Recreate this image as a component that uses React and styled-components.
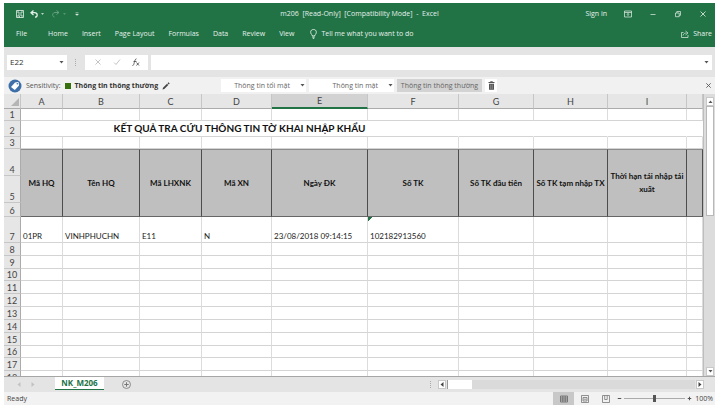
import React from "react";
import styled, { createGlobalStyle } from "styled-components";

const UI_FONT = '"Open Sans", "Noto Sans", sans-serif';
const CELL_FONT = 'Lato, "Noto Sans", sans-serif';
const GREEN = "#217346";

const GlobalStyle = createGlobalStyle`
  * { box-sizing: border-box; }
  body { margin: 0; background: #fff; font-family: ${UI_FONT}; font-size: 7px; color: #333; }
  button, input, table { font: inherit; color: inherit; }
  button { border: 0; padding: 0; background: none; }
  svg { display: block; }
`;

const Window = styled.div`
  display: flex;
  flex-direction: column;
  height: 100vh;
  padding: 3px 0 0 4px;
  overflow: hidden;
`;

const Ribbon = styled.header`
  flex: none;
  background: ${GREEN};
  color: #e6f0ea;
`;

const TitleBar = styled.div`
  display: grid;
  grid-template-columns: 1fr auto 1fr;
  align-items: center;
  height: 21px;
  padding: 0 8px;
`;

const QuickAccess = styled.div`
  display: flex;
  align-items: center;
  gap: 4px;
  padding-left: 4px;
`;

const DocumentTitle = styled.h1`
  margin: 0;
  font-size: 7px;
  font-weight: 400;
  white-space: pre;
`;

const WindowButtons = styled.div`
  display: flex;
  align-items: center;
  justify-content: flex-end;
  gap: 17px;
`;

const IconButton = styled.button`
  display: flex;
  align-items: center;
  justify-content: center;
  flex: none;
  opacity: ${(p) => (p.$faded ? 0.35 : 1)};
`;

const TabBar = styled.nav`
  display: flex;
  align-items: center;
  gap: 14px;
  height: 23px;
  padding: 0 3px 4px 12px;
`;

const RibbonTab = styled.button`
  white-space: nowrap;
  margin-right: ${(p) => (p.$wide ? "7px" : "0")};
`;

const IconLabel = styled.button`
  display: flex;
  align-items: center;
  gap: 4px;
  white-space: nowrap;
  margin-left: ${(p) => (p.$end ? "auto" : "2px")};
`;

const FormulaBar = styled.div`
  display: flex;
  flex: none;
  align-items: center;
  gap: 3px;
  height: 30px;
  padding: 0 3px;
  background: #e4e4e4;
`;

const Field = styled.div`
  display: flex;
  align-items: center;
  flex: ${(p) => (p.$grow ? "1" : "none")};
  width: ${(p) => p.$width || "auto"};
  height: 15px;
  padding: 0 3px;
  background: #fff;
  justify-content: ${(p) => (p.$spread ? "space-around" : "flex-start")};
`;

const FieldInput = styled.input`
  flex: 1;
  min-width: 0;
  height: 13px;
  border: 0;
  padding: 0 0 2px;
  outline: 0;
  background: none;
  font-size: 8px;
`;

const Grip = styled.span`
  width: 1px;
  height: 7px;
  margin: 0 6px 0 5px;
  border-left: 1px dotted #aaa;
`;

const SensitivityBar = styled.div`
  display: grid;
  grid-template-columns: 213px 1fr auto;
  align-items: center;
  flex: none;
  height: 17px;
  padding: 0 3px 0 4px;
  background: #f1f1f1;
`;

const SensitivityInfo = styled.div`
  display: flex;
  align-items: center;
  gap: 4px;
  color: #555;
  white-space: nowrap;
`;

const Swatch = styled.span`
  width: 6px;
  height: 6px;
  background: #38700f;
`;

const CurrentLabel = styled.strong`
  font-weight: 700;
  color: #333;
`;

const LabelOptions = styled.div`
  display: flex;
  gap: 3px;
`;

const LabelOption = styled.button`
  display: flex;
  align-items: center;
  justify-content: ${(p) => (p.$selected ? "center" : "flex-end")};
  gap: 10px;
  width: ${(p) => (p.$icon ? "12px" : "85px")};
  height: 13px;
  padding: 0 ${(p) => (p.$icon || p.$selected ? "2px" : "1px")};
  background: ${(p) => (p.$selected ? "#d3d3d3" : "#fff")};
  color: #666;
  white-space: nowrap;
`;

const SheetArea = styled.main`
  display: flex;
  flex: 1;
  min-height: 0;
  border-bottom: 1px solid #a6a6a6;
`;

const SheetView = styled.div`
  flex: 1;
  min-width: 0;
  overflow: hidden;
`;

const Sheet = styled.table`
  width: 100%;
  table-layout: fixed;
  border-collapse: separate;
  border-spacing: 0;
  font-family: ${CELL_FONT};
  font-size: 8px;
  line-height: 11px;
  color: #222;
`;

const Col = styled.col`
  width: ${(p) => p.$width};
`;

const Row = styled.tr`
  height: ${(p) => p.$height};
`;

const ColumnHead = styled.th`
  padding: 0;
  font-size: 9px;
  font-weight: 400;
  color: #444;
  background: ${(p) => (p.$active ? "#d2d2d2" : "#e6e6e6")};
  border-right: 1px solid #c6c6c6;
  border-bottom: ${(p) => (p.$active ? `2px solid ${GREEN}` : "1px solid #ababab")};
`;

const Corner = styled(ColumnHead)`
  vertical-align: bottom;

  svg {
    margin: 0 1px 2px auto;
  }
`;

const RowHead = styled.th`
  padding: 0;
  overflow: hidden;
  font-size: 9px;
  font-weight: 400;
  vertical-align: bottom;
  color: #444;
  background: #e6e6e6;
  border-right: 1px solid #ababab;
  border-bottom: 1px solid #c6c6c6;
`;

const Cell = styled.td`
  padding: 0 2px;
  overflow: hidden;
  white-space: nowrap;
  vertical-align: bottom;
  border-right: 1px solid ${(p) => (p.$open ? "#fff" : "#dcdcdc")};
  border-bottom: 1px solid #d4d4d4;
  background: ${(p) =>
    p.$flagged ? `linear-gradient(135deg, ${GREEN} 3px, transparent 3px)` : "#fff"};
`;

const TitleCell = styled(Cell)`
  font-size: 10px;
  font-weight: 700;
  text-align: center;
  vertical-align: middle;
  color: #111;
`;

const HeadingCell = styled.th`
  padding: 0;
  font-size: 8px;
  font-weight: 700;
  line-height: 13px;
  color: #111;
  background: #bfbfbf;
  border-right: 1px solid #4d4d4d;
  border-bottom: 1px solid #666;
  border-top: 1px solid #8c8c8c;
`;

const VerticalScroll = styled.div`
  display: flex;
  flex: none;
  flex-direction: column;
  align-items: center;
  width: 12px;
  padding: 3px 0 0 1px;
  background: #dcdcdc;
  border-left: 1px solid #bdbdbd;
`;

const ScrollButton = styled(IconButton)`
  width: 8px;
  height: 9px;
  background: #fff;
  border: 1px solid #c8c8c8;
`;

const VerticalThumb = styled.div`
  width: 8px;
  height: 110px;
  margin-bottom: auto;
  background: #fff;
  border: 1px solid #b8b8b8;
`;

const SheetTabs = styled.footer`
  display: grid;
  grid-template-columns: 1fr 279px;
  flex: none;
  height: 15px;
  padding-right: 11px;
  background: #e4e4e4;
`;

const TabGroup = styled.div`
  display: flex;
  align-items: center;
  gap: 10px;
  padding-left: 13px;
`;

const SheetTab = styled.button`
  align-self: flex-start;
  width: 49px;
  height: 13px;
  margin: 0 8px 0 10px;
  background: #fff;
  border-bottom: 1px solid ${GREEN};
  color: ${GREEN};
  font-size: 8px;
  line-height: 12px;
  font-weight: 700;
  white-space: nowrap;
`;

const HorizontalScroll = styled.div`
  display: flex;
  align-items: center;
  gap: 1px;
`;

const HorizontalTrack = styled.div`
  flex: 1;
  height: 9px;
  background: #dadada;
`;

const HorizontalThumb = styled.div`
  width: 25px;
  height: 9px;
  background: #fff;
  border-left: 1px solid #999;
`;

const StatusBar = styled.div`
  display: flex;
  align-items: center;
  justify-content: space-between;
  flex: none;
  height: 13px;
  padding: 0 2px 0 3px;
  background: #f2f2f2;
  color: #444;
  font-size: 7px;
`;

const ViewControls = styled.div`
  display: flex;
  align-items: center;
`;

const ViewButton = styled(IconButton)`
  width: 21px;
  height: 13px;
  background: ${(p) => (p.$active ? "#c8c8c8" : "transparent")};
`;

const ZoomSlider = styled.input`
  appearance: none;
  width: 61px;
  height: 9px;
  margin: 0 1px;
  background: linear-gradient(#aaa, #aaa) center / 100% 1px no-repeat;

  &::-webkit-slider-thumb {
    appearance: none;
    width: 3px;
    height: 7px;
    background: #555;
  }
`;

const ZoomValue = styled.span`
  margin-left: 2px;
`;

function Caret({ up, color = "#555" }) {
  return (
    <svg width="5" height="3" viewBox="0 0 5 3">
      <path d={up ? "M0.5 3 2.5 0.5 4.5 3z" : "M0.5 0 2.5 2.5 4.5 0z"} fill={color} />
    </svg>
  );
}

function SideArrow({ left, color = "#444" }) {
  return (
    <svg width="4" height="5" viewBox="0 0 4 5">
      <path d={left ? "M3.5 0 0.5 2.5 3.5 5z" : "M0.5 0 3.5 2.5 0.5 5z"} fill={color} />
    </svg>
  );
}

function Stroke({ d, size = 8, width = 0.8, color = "currentColor" }) {
  return (
    <svg width={size} height={size} viewBox="0 0 8 8" fill="none" stroke={color} strokeWidth={width}>
      <path d={d} />
    </svg>
  );
}

const CROSS = "M1.5 1.5 6.5 6.5M6.5 1.5 1.5 6.5";

const COLUMNS = [
  ["A", "42px", "Mã HQ", "01PR"],
  ["B", "77px", "Tên HQ", "VINHPHUCHN"],
  ["C", "62px", "Mã LHXNK", "E11"],
  ["D", "70px", "Mã XN", "N"],
  ["E", "96px", "Ngày ĐK", "23/08/2018 09:14:15"],
  ["F", "91px", "Số TK", "102182913560"],
  ["G", "75px", "Số TK đầu tiên", ""],
  ["H", "74px", "Số TK tạm nhập TX", ""],
  ["I", "79px", "Thời hạn tái nhập tái xuất", ""],
  ["", "auto", "", ""],
];

const EMPTY_ROWS = [
  [8, "13px"], [9, "13px"], [10, "12px"], [11, "13px"], [12, "13px"], [13, "13px"],
  [14, "13px"], [15, "13px"], [16, "12px"], [17, "13px"], [18, "13px"],
];

function EmptyRow({ number, height }) {
  return (
    <Row $height={height}>
      <RowHead scope="row">{number}</RowHead>
      {COLUMNS.map(([name]) => <Cell key={name} />)}
    </Row>
  );
}

function Spreadsheet() {
  return (
    <Sheet>
      <colgroup>
        <Col $width="17px" />
        {COLUMNS.map(([name, width]) => <Col key={name} $width={width} />)}
      </colgroup>
      <thead>
        <Row $height="15px">
          <Corner aria-label="Select all">
            <svg width="8" height="8" viewBox="0 0 8 8"><path d="M8 0V8H0z" fill="#b5b5b5" /></svg>
          </Corner>
          {COLUMNS.map(([name]) => (
            <ColumnHead key={name} scope="col" $active={name === "E"}>{name}</ColumnHead>
          ))}
        </Row>
      </thead>
      <tbody>
        <EmptyRow number={1} height="12px" />
        <Row $height="16px">
          <RowHead scope="row">2</RowHead>
          <TitleCell colSpan={6} $open>KẾT QUẢ TRA CỨU THÔNG TIN TỜ KHAI NHẬP KHẨU</TitleCell>
          <Cell $open /><Cell $open /><Cell $open /><Cell $open />
        </Row>
        <EmptyRow number={3} height="12px" />
        <Row $height="27px">
          <RowHead scope="row">4</RowHead>
          {COLUMNS.map(([name, , heading]) => (
            <HeadingCell key={name} rowSpan={3}>{heading}</HeadingCell>
          ))}
        </Row>
        <Row $height="27px"><RowHead scope="row">5</RowHead></Row>
        <Row $height="14px"><RowHead scope="row">6</RowHead></Row>
        <Row $height="26px">
          <RowHead scope="row">7</RowHead>
          {COLUMNS.map(([name, , , value]) => (
            <Cell key={name} $flagged={name === "F"}>{value}</Cell>
          ))}
        </Row>
        {EMPTY_ROWS.map(([number, height]) => (
          <EmptyRow key={number} number={number} height={height} />
        ))}
      </tbody>
    </Sheet>
  );
}

export default function App() {
  return (
    <Window>
      <GlobalStyle />
      <Ribbon>
        <TitleBar>
          <QuickAccess>
            <IconButton aria-label="Save">
              <Stroke d="M0.5 0.5H7.5V7.5H0.5zM2 0.5V3H6V0.5M2 7.5V5H6V7.5M3.5 6V7.5" />
            </IconButton>
            <IconButton aria-label="Undo">
              <svg width="19" height="8" viewBox="0 0 19 8" fill="none" stroke="currentColor" strokeWidth="1.3">
                <path d="M5.500 0.500 3 2.700 5.500 5M3 2.700H6.500C10 2.700 10 7.200 7 7.200" />
                <path d="M13 3.200H16L14.500 4.700z" fill="currentColor" stroke="none" />
              </svg>
            </IconButton>
            <IconButton aria-label="Redo" $faded>
              <svg width="18" height="8" viewBox="0 0 18 8" fill="none" stroke="currentColor">
                <path d="M5.500 0.500 8 2.500 5.500 4.500M8 2.500H4C1 2.500 1 7 3.500 7" />
                <path d="M12 3.200H15L13.500 4.700z" fill="currentColor" stroke="none" />
              </svg>
            </IconButton>
            <IconButton aria-label="Customize quick access">
              <svg width="8" height="8" viewBox="0 0 8 8"><path d="M2.500 2.500H5.500M2.500 4H5.500L4 5.500z" stroke="currentColor" strokeWidth="0.4" fill="currentColor" /></svg>
            </IconButton>
          </QuickAccess>
          <DocumentTitle>{"m206  [Read-Only]  [Compatibility Mode]  -  Excel"}</DocumentTitle>
          <WindowButtons>
            <IconButton>Sign in</IconButton>
            <IconButton aria-label="Ribbon display options">
              <Stroke d="M0.500 1H7.500V7H0.500zM0.500 2.500H7.500M4 6V3.500M3 4.500 4 3.500 5 4.500" width={0.7} />
            </IconButton>
            <IconButton aria-label="Minimize"><Stroke d="M1.500 4.500H6.500" width={0.7} /></IconButton>
            <IconButton aria-label="Restore"><Stroke d="M1.500 3H5.200V6.700H1.500zM2.800 3V1.500H6.500V5.300H5.200" width={0.7} /></IconButton>
            <IconButton aria-label="Close"><Stroke d={CROSS} /></IconButton>
          </WindowButtons>
        </TitleBar>
        <TabBar>
          <RibbonTab $wide>File</RibbonTab>
          {["Home", "Insert", "Page Layout", "Formulas", "Data", "Review", "View"].map((tab) => (
            <RibbonTab key={tab}>{tab}</RibbonTab>
          ))}
          <IconLabel>
            <svg width="7" height="10" viewBox="0 0 7 10" fill="none" stroke="currentColor" strokeWidth="0.9">
              <path d="M2.200 7V6C0 4.500 0 0.500 3.500 0.500S7 4.500 4.800 6V7zM2.300 8.200H4.700M2.800 9.400H4.200" />
            </svg>
            Tell me what you want to do
          </IconLabel>
          <IconLabel $end>
            <Stroke d="M2.500 2.500H0.500V7.500H7V5M2 5.500C2.500 3.500 4 3 5.500 3M4.500 1 7 3 4.500 5" width={0.7} />
            Share
          </IconLabel>
        </TabBar>
      </Ribbon>

      <FormulaBar>
        <Field $width="60px">
          <FieldInput aria-label="Name box" defaultValue="E22" />
          <Caret />
        </Field>
        <Grip />
        <Field $width="63px" $spread>
          <IconButton aria-label="Cancel"><Stroke d={CROSS} color="#b5b5b5" /></IconButton>
          <IconButton aria-label="Enter"><Stroke d="M1 4.500 3 6.500 7 1.500" color="#b5b5b5" /></IconButton>
          <IconButton aria-label="Insert function">
            <Stroke d="M0.500 7.500C2.500 8 2 1 4.500 0.800M1.500 3.500H4.500M4.500 4.500 7 7.500M7 4.500 4.500 7.500" color="#444" />
          </IconButton>
        </Field>
        <Field $grow>
          <FieldInput aria-label="Formula" />
          <Caret />
        </Field>
      </FormulaBar>

      <SensitivityBar>
        <SensitivityInfo>
          <svg width="14" height="14" viewBox="0 0 14 14">
            <circle cx="7" cy="7" r="6.500" fill="#3f6fa8" />
            <path d="M3 8 7 3.500 10.500 3 11 6.500 6.800 11z" fill="#fff" />
            <circle cx="9.300" cy="4.800" r="0.800" fill="#3f6fa8" />
          </svg>
          <span>Sensitivity:</span>
          <Swatch />
          <CurrentLabel>Thông tin thông thường</CurrentLabel>
          <IconButton aria-label="Edit label">
            <svg width="8" height="8" viewBox="0 0 8 8"><path d="M0.500 7.500 1 5.700 5 1.700 6.300 3 2.300 7zM5.500 1.200 6.500 0.300 7.700 1.500 6.800 2.500z" fill="#444" /></svg>
          </IconButton>
        </SensitivityInfo>
        <LabelOptions>
          <LabelOption>Thông tin tối mật<Caret /></LabelOption>
          <LabelOption>Thông tin mật<Caret /></LabelOption>
          <LabelOption $selected>Thông tin thông thường</LabelOption>
          <LabelOption $icon aria-label="Delete label">
            <svg width="7" height="9" viewBox="0 0 7 9"><path d="M0.500 1H2.300V0.300H4.700V1H6.500V2H0.500zM1 2.700H6V8.700H1z" fill="#555" /><path d="M2.700 3.500V8M4.300 3.500V8" stroke="#bbb" strokeWidth="0.500" /></svg>
          </LabelOption>
        </LabelOptions>
        <IconButton aria-label="Close sensitivity bar"><Stroke d={CROSS} size={7} color="#555" width={1} /></IconButton>
      </SensitivityBar>

      <SheetArea>
        <SheetView><Spreadsheet /></SheetView>
        <VerticalScroll>
          <ScrollButton aria-label="Scroll up"><Caret up /></ScrollButton>
          <VerticalThumb />
          <ScrollButton aria-label="Scroll down"><Caret /></ScrollButton>
        </VerticalScroll>
      </SheetArea>

      <SheetTabs>
        <TabGroup>
          <IconButton aria-label="Previous sheet"><SideArrow left color="#c2c2c2" /></IconButton>
          <IconButton aria-label="Next sheet"><SideArrow color="#c2c2c2" /></IconButton>
          <SheetTab>NK_M206</SheetTab>
          <IconButton aria-label="New sheet">
            <svg width="9" height="9" viewBox="0 0 9 9" fill="none" stroke="#777" strokeWidth="0.800">
              <circle cx="4.500" cy="4.500" r="4" />
              <path d="M4.500 2.300V6.700M2.300 4.500H6.700" strokeWidth="1" />
            </svg>
          </IconButton>
        </TabGroup>
        <HorizontalScroll>
          <Grip />
          <ScrollButton aria-label="Scroll left"><SideArrow left /></ScrollButton>
          <HorizontalTrack><HorizontalThumb /></HorizontalTrack>
          <ScrollButton aria-label="Scroll right"><SideArrow /></ScrollButton>
        </HorizontalScroll>
      </SheetTabs>

      <StatusBar>
        <span>Ready</span>
        <ViewControls>
          <ViewButton aria-label="Normal view" $active>
            <Stroke d="M0.500 1H7.500V7H0.500zM0.500 3H7.500M0.500 5H7.500M2.800 1V7M5.200 1V7" color="#666" />
          </ViewButton>
          <ViewButton aria-label="Page layout view">
            <Stroke d="M0.500 0.500H7.500V7.500H0.500zM2 2.500H6V6H2zM2.500 4.200H5.500" color="#777" />
          </ViewButton>
          <ViewButton aria-label="Page break view">
            <Stroke d="M0.500 0.500H7.500V7.500H0.500zM2.700 0.500V4.500H5.200V0.500" color="#777" />
          </ViewButton>
          <IconButton aria-label="Zoom out"><Stroke d="M2 4H6" size={7} width={1.2} color="#555" /></IconButton>
          <ZoomSlider type="range" aria-label="Zoom" min="0" max="200" defaultValue="100" />
          <IconButton aria-label="Zoom in"><Stroke d="M2 4H6M4 2V6" size={7} width={1.2} color="#555" /></IconButton>
          <ZoomValue>100%</ZoomValue>
        </ViewControls>
      </StatusBar>
    </Window>
  );
}
